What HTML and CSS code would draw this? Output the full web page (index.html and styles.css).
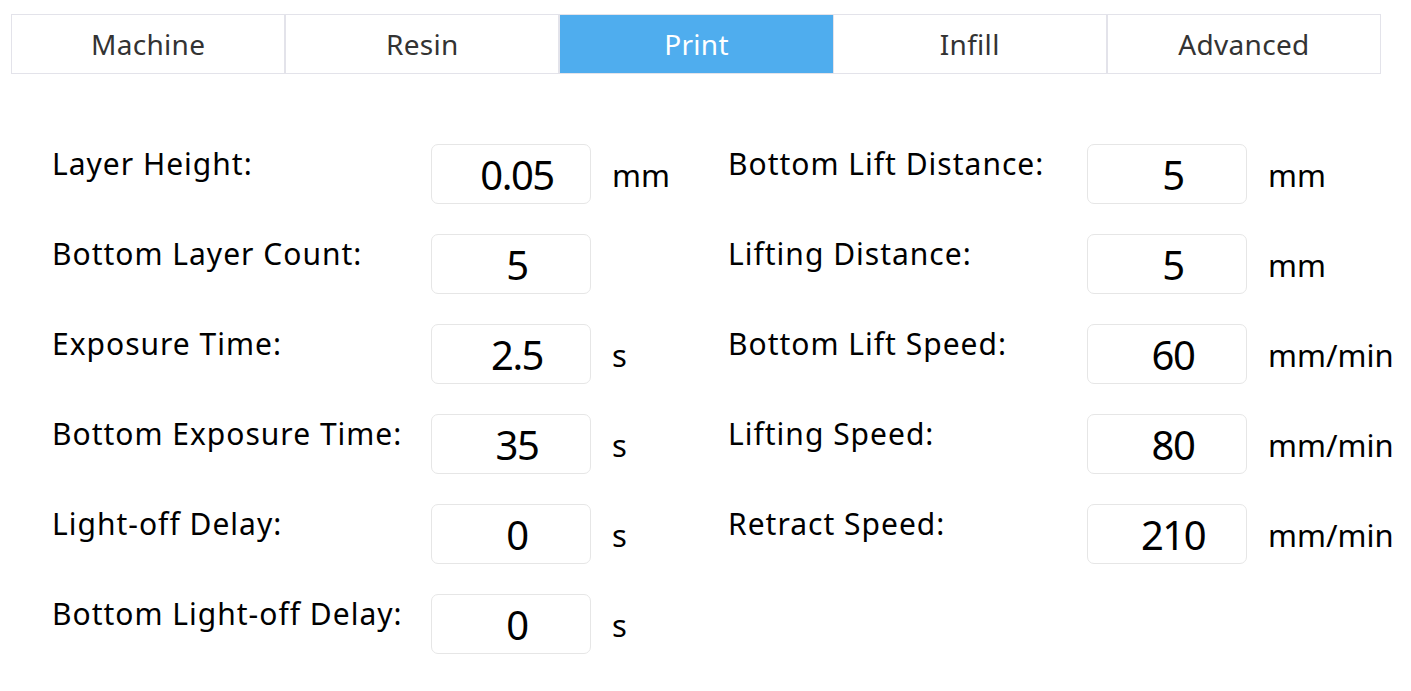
FILE: index.html
```html
<!DOCTYPE html>
<html>
<head>
<meta charset="utf-8">
<link rel="stylesheet" href="styles.css">
</head>
<body>
<div class="page">
  <div class="tabs">
    <div class="tab">Machine</div>
    <div class="tab">Resin</div>
    <div class="tab active">Print</div>
    <div class="tab">Infill</div>
    <div class="tab">Advanced</div>
  </div>
  <div class="form">
    <div class="col left">
      <div class="row"><div class="label">Layer Height:</div><div class="input">0.05</div><div class="unit">mm</div></div>
      <div class="row"><div class="label">Bottom Layer Count:</div><div class="input">5</div><div class="unit"></div></div>
      <div class="row"><div class="label">Exposure Time:</div><div class="input">2.5</div><div class="unit">s</div></div>
      <div class="row"><div class="label">Bottom Exposure Time:</div><div class="input">35</div><div class="unit">s</div></div>
      <div class="row"><div class="label">Light-off Delay:</div><div class="input">0</div><div class="unit">s</div></div>
      <div class="row"><div class="label">Bottom Light-off Delay:</div><div class="input">0</div><div class="unit">s</div></div>
    </div>
    <div class="col right">
      <div class="row"><div class="label">Bottom Lift Distance:</div><div class="input">5</div><div class="unit">mm</div></div>
      <div class="row"><div class="label">Lifting Distance:</div><div class="input">5</div><div class="unit">mm</div></div>
      <div class="row"><div class="label">Bottom Lift Speed:</div><div class="input">60</div><div class="unit">mm/min</div></div>
      <div class="row"><div class="label">Lifting Speed:</div><div class="input">80</div><div class="unit">mm/min</div></div>
      <div class="row"><div class="label">Retract Speed:</div><div class="input">210</div><div class="unit">mm/min</div></div>
    </div>
  </div>
</div>
</body>
</html>
```
FILE: styles.css
```css
html, body {
  margin: 0;
  padding: 0;
  background: #ffffff;
}
body {
  font-family: "Noto Sans", "Open Sans", sans-serif;
  color: #000;
}
.page {
  padding: 14px 0 0 11px;
}
.tabs {
  display: flex;
  width: 1370px;
  height: 60px;
  border: 1px solid #e3e3ea;
  box-sizing: border-box;
}
.tab {
  flex: 1;
  display: flex;
  align-items: center;
  justify-content: center;
  font-size: 28px;
  letter-spacing: 0.3px;
  color: #333;
  border-right: 2px solid #e3e3ea;
}
.tab:last-child {
  border-right: none;
}
.tab.active {
  background: #4fadee;
  color: #fff;
  border-right: 1px solid #e3e3ea;
}
.form {
  display: flex;
  padding: 70px 0 0 41px;
}
.col {
  display: flex;
  flex-direction: column;
  gap: 30px;
}
.col.left {
  width: 676px;
}
.row {
  display: flex;
  align-items: flex-start;
  height: 60px;
}
.left .label {
  width: 379px;
}
.right .label {
  width: 359px;
}
.label {
  font-size: 30px;
  line-height: 40px;
  letter-spacing: 1px;
  white-space: nowrap;
}
.input {
  width: 160px;
  height: 60px;
  box-sizing: border-box;
  border: 1px solid #e6e6e6;
  border-radius: 7px;
  display: flex;
  align-items: center;
  justify-content: center;
  padding-left: 12px;
  font-size: 40px;
  letter-spacing: -1.5px;
}
.unit {
  align-self: center;
  margin-left: 21px;
  font-size: 31px;
  padding-top: 2px;
  white-space: nowrap;
}
```
